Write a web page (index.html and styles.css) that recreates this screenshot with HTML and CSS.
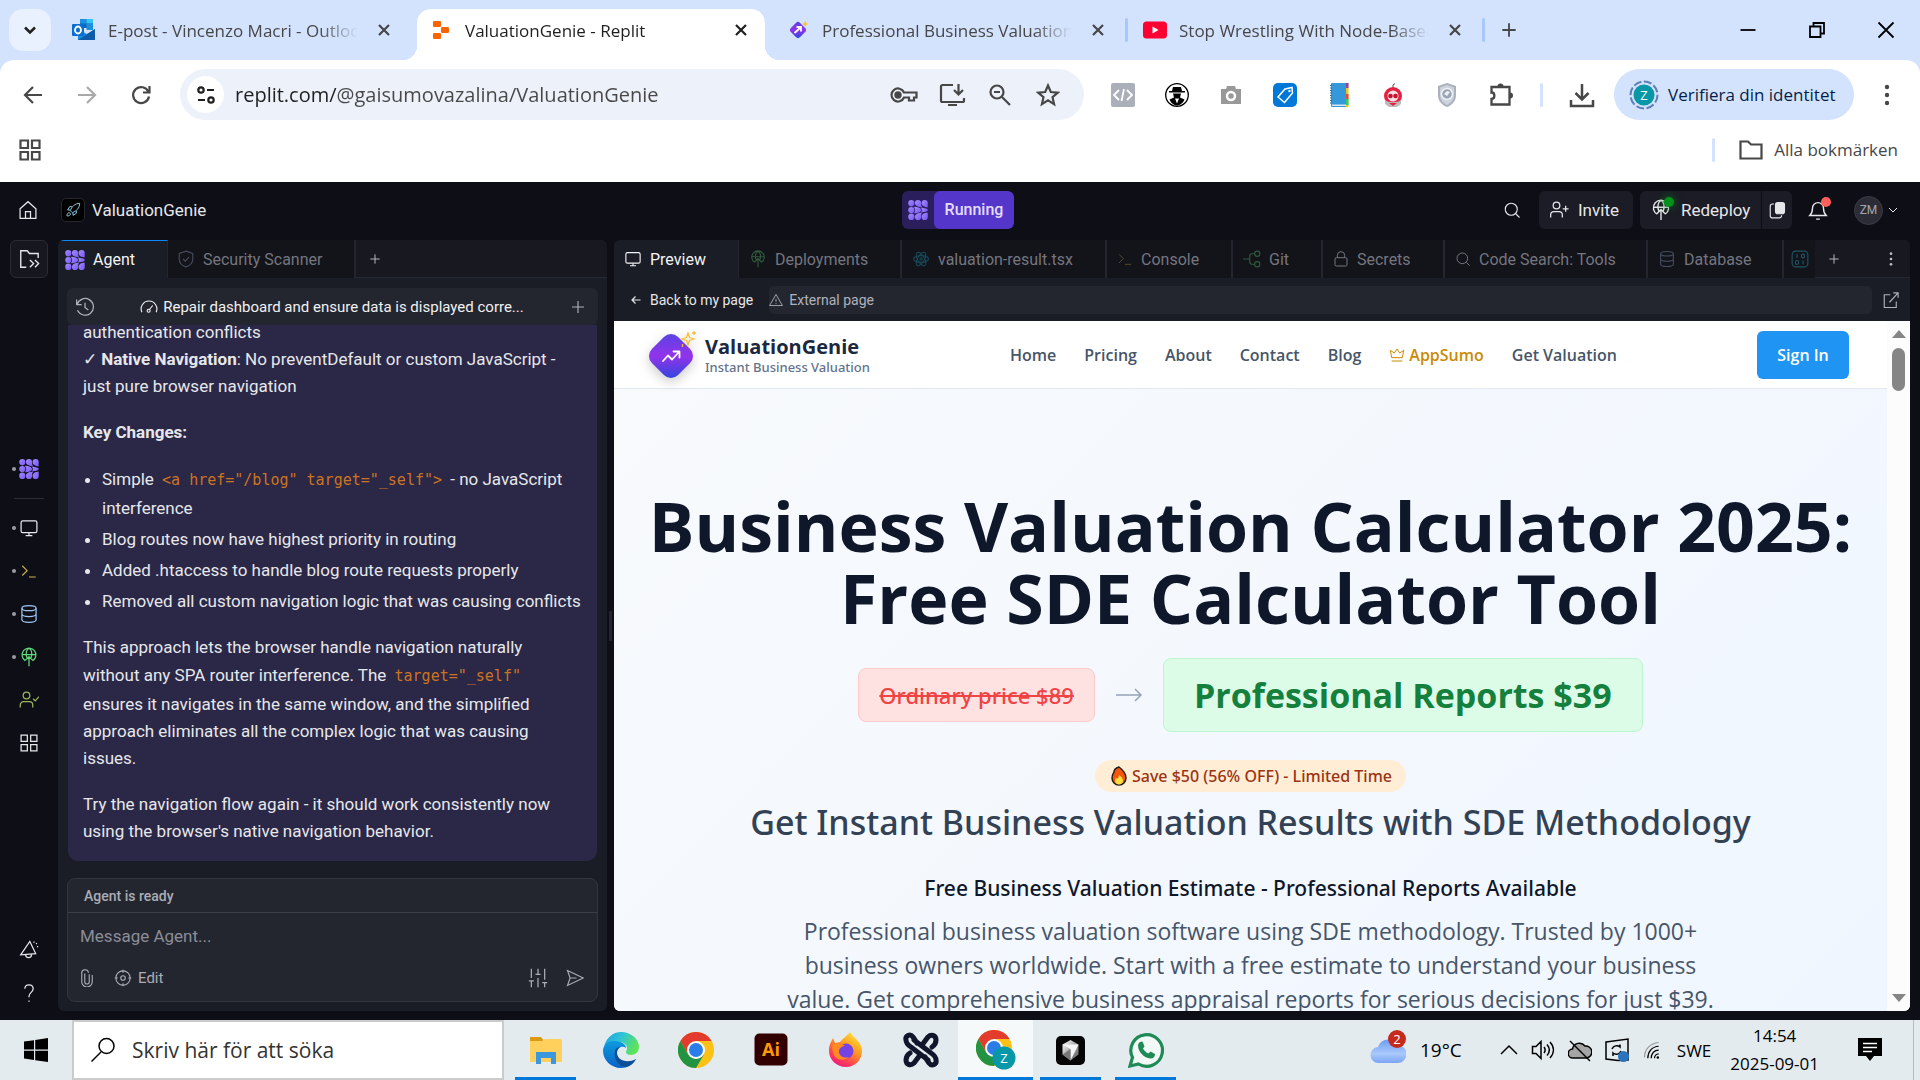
FILE: index.html
```html
<!DOCTYPE html>
<html lang="sv">
<head>
<meta charset="utf-8">
<meta name="viewport" content="width=device-width, initial-scale=1">
<title>ValuationGenie - Replit</title>
<link rel="stylesheet" href="styles.css">
</head>
<body>
<svg class="sprite" aria-hidden="true">
  <defs>
    <linearGradient id="gem" x1="0" y1="0" x2="1" y2="1"><stop offset="0" stop-color="#4f46e5"/><stop offset=".5" stop-color="#9333ea"/><stop offset="1" stop-color="#2149dc"/></linearGradient>
    <linearGradient id="agentfill" x1="0" y1="0" x2="1" y2="1"><stop offset="0" stop-color="#a48bff"/><stop offset="1" stop-color="#7657f5"/></linearGradient>
    <linearGradient id="edgeA" x1="0" y1="0" x2="1" y2=".4"><stop offset="0" stop-color="#1a9fe0"/><stop offset=".5" stop-color="#2fc3d8"/><stop offset="1" stop-color="#5be35a"/></linearGradient>
    <linearGradient id="edgeB" x1="0" y1="0" x2="0" y2="1"><stop offset="0" stop-color="#0c9be0"/><stop offset="1" stop-color="#0b62c4"/></linearGradient>
    <linearGradient id="fox" x1=".8" y1="0" x2=".2" y2="1"><stop offset="0" stop-color="#ffe93b"/><stop offset=".4" stop-color="#ff9a1f"/><stop offset=".75" stop-color="#ff3f55"/><stop offset="1" stop-color="#e31587"/></linearGradient>
    <linearGradient id="cloudfill" x1="0" y1="0" x2="0" y2="1"><stop offset="0" stop-color="#6d9cf2"/><stop offset=".6" stop-color="#a9c9fb"/><stop offset="1" stop-color="#7ba5f4"/></linearGradient>
    <linearGradient id="cube" x1="0" y1="0" x2="1" y2="1"><stop offset="0" stop-color="#fff"/><stop offset="1" stop-color="#555"/></linearGradient>
  </defs>
  <symbol id="i-x" viewBox="0 0 24 24"><path d="M7 7l10 10M17 7L7 17" stroke-width="2.2"/></symbol>
  <symbol id="i-plus" viewBox="0 0 24 24"><path d="M12 4v16M4 12h16"/></symbol>
  <symbol id="i-agent" viewBox="0 0 24 24"><g fill="url(#agentfill)" stroke="none"><path d="M4 0a3.700 3.700 0 0 1 3.700 3.700C7.700 5.500 7 7.700 4 7.700S.3 5.500.3 3.700A3.700 3.700 0 0 1 4 0z"/><path d="M12 0a3.700 3.700 0 0 1 3.700 3.700c0 2-.2 3 1.500 5.300C12 8.500 8.300 7 8.300 3.700A3.700 3.700 0 0 1 12 0z"/><path d="M20 0a3.700 3.700 0 0 1 3.700 3.700c0 2 0 3-.2 5.300-4-.5-7.200-2-7.200-5.300A3.700 3.700 0 0 1 20 0z"/><circle cx="4" cy="12" r="3.700"/><path d="M7 8c5 0 8.700 1.500 8.700 4S12 16 7 16c2.200-2.500 2.200-5.500 0-8z"/><path d="M15.500 9.200c4.500.2 8.200 1 8.200 2.800s-3.700 2.600-8.200 2.800c1.500-2 1.500-3.600 0-5.600z"/><path d="M4 24a3.700 3.700 0 0 0 3.700-3.700c0-1.800-.7-4-3.700-4s-3.700 2.200-3.700 4A3.700 3.700 0 0 0 4 24z"/><path d="M12 24a3.700 3.700 0 0 0 3.700-3.700c0-2-.2-3 1.500-5.300-5.200.5-8.900 2-8.900 5.300A3.700 3.700 0 0 0 12 24z"/><path d="M20 24a3.700 3.700 0 0 0 3.700-3.700c0-2 0-3-.2-5.300-4 .5-7.200 2-7.200 5.300A3.700 3.700 0 0 0 20 24z"/></g></symbol>
  <symbol id="i-monitor" viewBox="0 0 24 24"><rect x="2.500" y="3.500" width="19" height="14" rx="2"/><path d="M12 18v3M8 21h8"/></symbol>
  <symbol id="i-console" viewBox="0 0 24 24"><path d="M3 5l6.500 6.500L3 18M12 20h9"/></symbol>
  <symbol id="i-db" viewBox="0 0 24 24"><ellipse cx="12" cy="5" rx="8.500" ry="3"/><path d="M3.500 5v14c0 1.700 3.800 3 8.500 3s8.500-1.300 8.500-3V5M3.500 12c0 1.700 3.800 3 8.500 3s8.500-1.300 8.500-3"/></symbol>
  <symbol id="i-deploy" viewBox="0 0 24 24"><path d="M7.500 16.500a8.300 8.300 0 1 1 9 0M4 9h16M9.500 13C7.500 8 9 3 12 1.500 15 3 16.500 8 14.500 13M12 23V11M7.500 16L12 11.500 16.500 16"/></symbol>
  <symbol id="i-grid" viewBox="0 0 24 24"><path d="M2.500 2.500h7.500v7.500H2.500zM14 2.500h7.500v7.500H14zM2.500 14h7.500v7.500H2.500zM14 14h7.500v7.500H14z"/></symbol>
  <symbol id="i-search" viewBox="0 0 24 24"><circle cx="11" cy="11" r="8"/><path d="M17 17l5 5"/></symbol>
</svg>

<div class="screen">
<header class="chrome">
  <div class="tabstrip">
    <button class="tabs-menu" aria-label="Sök bland flikar"><svg class="ic s20" viewBox="0 0 24 24"><path d="M6 9l6 6 6-6" stroke-width="3"/></svg></button>
    <div class="btab">
      <svg class="fav" viewBox="0 0 24 24"><path d="M8 1h13v9H8z" fill="#1066b5"/><path d="M8 1h6.500v4.500H8z" fill="#1b8fe0"/><path d="M14.500 1H21v4.500h-6.500z" fill="#35c5f4"/><path d="M14.500 5.500H21V12h-6.500z" fill="#1b8fe0"/><path d="M6 11l9 5 8-5v11H6z" fill="#1490df"/><path d="M6 22l17-11v11z" fill="#0f5ba8"/><rect x="0" y="6" width="12" height="12" rx="1" fill="#0a6ed1"/><ellipse cx="6" cy="12" rx="3" ry="3.500" fill="none" stroke="#fff" stroke-width="1.800"/></svg>
      <span class="btab-title">E-post - Vincenzo Macri - Outlook</span>
      <button class="btab-x" aria-label="Stäng"><svg class="ic s24"><use href="#i-x"/></svg></button>
    </div>
    <div class="btab active">
      <svg class="fav" viewBox="0 0 24 24"><g fill="#f96302"><rect x="4" y="3" width="8" height="6" rx="1.300"/><rect x="12" y="9" width="8" height="6" rx="1.300"/><rect x="4" y="15" width="8" height="6" rx="1.300"/></g></svg>
      <span class="btab-title">ValuationGenie - Replit</span>
      <button class="btab-x" aria-label="Stäng"><svg class="ic s24"><use href="#i-x"/></svg></button>
    </div>
    <div class="btab">
      <svg class="fav" viewBox="0 0 24 24"><rect x="5.500" y="5.500" width="13" height="13" rx="3" transform="rotate(45 12 12)" fill="url(#gem)"/><path d="M8.500 15l6-5.500M10.500 9h4.500v4.500" fill="none" stroke="#fff" stroke-width="1.800"/><path d="M19 3l1 2 2 1-2 1-1 2-1-2-1-1 1-1z" fill="#f7bf3a"/></svg>
      <span class="btab-title">Professional Business Valuation</span>
      <button class="btab-x" aria-label="Stäng"><svg class="ic s24"><use href="#i-x"/></svg></button>
    </div>
    <div class="btab divided">
      <svg class="fav" viewBox="0 0 24 24"><rect x="0" y="3.500" width="24" height="17" rx="3.500" fill="#ff0033"/><path d="M9.500 8.500v7l6-3.500z" fill="#fff"/></svg>
      <span class="btab-title">Stop Wrestling With Node-Based</span>
      <button class="btab-x" aria-label="Stäng"><svg class="ic s24"><use href="#i-x"/></svg></button>
    </div>
    <button class="newtab" aria-label="Ny flik"><svg class="ic s20"><use href="#i-plus"/></svg></button>
    <div class="winbtns">
      <button aria-label="Minimera"><svg class="ic s18" viewBox="0 0 18 18"><path d="M1.500 9h15" stroke-width="1.800"/></svg></button>
      <button aria-label="Återställ"><svg class="ic s18" viewBox="0 0 18 18"><path d="M2 5.500h10.500V16H2zM5.500 5V2H16v10.500h-3" stroke-width="1.800"/></svg></button>
      <button aria-label="Stäng"><svg class="ic s18" viewBox="0 0 18 18"><path d="M1.500 1.500l15 15M16.500 1.500l-15 15" stroke-width="1.800"/></svg></button>
    </div>
  </div>

  <div class="toolbar">
    <button class="slot" aria-label="Bakåt"><svg class="ic s24" viewBox="0 0 24 24"><path d="M21 12H4M12 4l-8 8 8 8" stroke-width="2.200"/></svg></button>
    <button class="slot dim" aria-label="Framåt"><svg class="ic s24" viewBox="0 0 24 24"><path d="M3 12h17M12 4l8 8-8 8" stroke-width="2.200"/></svg></button>
    <button class="slot" aria-label="Läs in igen"><svg class="ic s24" viewBox="0 0 24 24"><path d="M19.500 9A8 8 0 1 0 20 13.500M20.500 3v6.500H14" stroke-width="2.200"/></svg></button>
    <div class="omnibox">
      <button class="siteinfo" aria-label="Webbplatsinformation"><svg class="ic s24" viewBox="0 0 24 24"><circle cx="7" cy="7" r="2.700"/><path d="M13 7h7M4 17h7"/><circle cx="17" cy="17" r="2.700"/></svg></button>
      <input class="url" aria-label="Adress" value="replit.com/@gaisumovazalina/ValuationGenie">
      <button class="slot48" aria-label="Lösenord"><svg class="ic s28" viewBox="0 0 28 28"><path d="M14 11.500A6.500 6.500 0 1 0 14 16.500h5v3h5v-3h2.500v-5z"/><circle cx="8" cy="14" r="2.600" fill="currentColor"/></svg></button>
      <button class="slot48" aria-label="Installera"><svg class="ic s28" viewBox="0 0 28 28"><path d="M15 4H4.500a1.500 1.500 0 0 0-1.500 1.500v14A1.500 1.500 0 0 0 4.500 21h20a1.500 1.500 0 0 0 1.500-1.500V17M20.500 3v10M16 9l4.500 4.500L25 9M10 24h9"/></svg></button>
      <button class="slot48" aria-label="Zooma"><svg class="ic s24" viewBox="0 0 24 24"><circle cx="9" cy="9" r="6.500"/><path d="M14 14l8 8M6 9h6"/></svg></button>
      <button class="slot48" aria-label="Bokmärke"><svg class="ic s24" viewBox="0 0 24 24"><path d="M12 2.500l2.800 6.500 7 .6-5.300 4.600 1.600 6.900L12 17.400l-6.100 3.700 1.600-6.900L2.200 9.600l7-.6z"/></svg></button>
    </div>
    <div class="exts">
      <button class="slot" aria-label="Kod"><svg class="s24" viewBox="0 0 24 24"><rect width="24" height="24" rx="2" fill="#abafb9"/><path d="M8 7l-5 5 5 5M16 7l5 5-5 5M13 6l-2.500 12" fill="none" stroke="#fff" stroke-width="1.800"/></svg></button>
      <button class="slot" aria-label="Detektiv"><svg class="s24" viewBox="0 0 24 24"><circle cx="12" cy="12" r="11.300" fill="#fff" stroke="#000" stroke-width="1.300"/><path d="M8 4h8l1 4h3v1.500H4V8h3zM8 10.500h8l-1 4 4.500 2c-1.500 3.500-4.500 6-7.500 6s-6-2.500-7.500-6l4.500-2z"/><path d="M10 15.500h4l-2 5z" fill="#fff"/></svg></button>
      <button class="slot" aria-label="Kamera"><svg class="s24" viewBox="0 0 24 24"><path d="M2 6h5l1-3h8l1 3h5v15H2z" fill="#999"/><circle cx="12" cy="13" r="4" fill="#999" stroke="#fff" stroke-width="2.500"/></svg></button>
      <button class="slot" aria-label="Etikett"><svg class="s24" viewBox="0 0 24 24"><rect width="24" height="24" rx="5" fill="#0078d7"/><path d="M12 6l7-1.500L19.500 10l-8 9.500L5 14z" fill="none" stroke="#fff" stroke-width="1.500"/><circle cx="16.500" cy="8" r="1.200" fill="#fff"/></svg></button>
      <button class="slot" aria-label="Anteckningar"><svg class="s24" viewBox="0 0 24 24"><path d="M18 0h3.500v24H18z" fill="#eac81a"/><path d="M18 0h3.500v5H18z" fill="#8e44ad"/><path d="M18 11h3.500v5H18z" fill="#e74c3c"/><path d="M18 16h3.500v6H18z" fill="#2ecc71"/><rect x="4" width="15" height="24" rx="1" fill="#3498db"/><path d="M5 21.500h14V23H5z" fill="#d5e6f2"/><path d="M4 2v20" stroke="#2d6e9e" stroke-width="2" stroke-dasharray="1 1.500"/></svg></button>
      <button class="slot" aria-label="Robot"><svg class="s24" viewBox="0 0 24 24"><path d="M12 5V2l2-1.500" stroke="#555" fill="none"/><circle cx="12" cy="13" r="9" fill="#e6213f"/><path d="M4 17c3 3 13 3 16 0v4l-4 3H8l-4-3z" fill="#bbb"/><path d="M8 20l4 3 4-3z" fill="#e6213f"/><circle cx="12" cy="13" r="5.500" fill="#f8dfe3"/><circle cx="9.500" cy="13" r="2.300" fill="#c4112e"/><circle cx="14.500" cy="13" r="2.300" fill="#c4112e"/></svg></button>
      <button class="slot" aria-label="Sköld"><svg class="s24" viewBox="0 0 24 24"><path d="M12 0l9 3v9c0 6-4 10-9 12-5-2-9-6-9-12V3z" fill="#a9b1bd"/><path d="M12 2l7 2.500V12c0 5-3 8-7 10-4-2-7-5-7-10V4.500z" fill="#cdd3dc"/><circle cx="12" cy="11" r="5.500" fill="#9aa6b6" stroke="#eef1f5" stroke-width="1.500"/><path d="M9 11l3-3 3 1-3 4z" fill="#eef1f5"/></svg></button>
      <button class="slot" aria-label="Tillägg"><svg class="ic s26" viewBox="0 0 26 26"><path d="M3.500 5h18v17.500h-18v-5.500c3.800 0 3.800-6.500 0-6.500z" stroke-width="2.300"/><path d="M9.500 4.500a3 3 0 0 1 6 0zM22 10.500a3 3 0 0 1 0 6z" fill="currentColor" stroke="none"/></svg></button>
    </div>
    <span class="vsep"></span>
    <button class="slot" aria-label="Nedladdningar"><svg class="ic s26" viewBox="0 0 26 26"><path d="M13 2v15M6.500 11l6.500 6.500L19.500 11M2 18v6h22v-6" stroke-width="2.500"/></svg></button>
    <button class="profile"><svg class="s30" viewBox="0 0 30 30"><circle cx="15" cy="15" r="13.500" fill="none" stroke="#5c7fb8" stroke-width="2" stroke-dasharray="8 2.500"/><circle cx="15" cy="15" r="10.500" fill="#0897a7"/><text x="15" y="20" text-anchor="middle" font-size="13" fill="#fff">Z</text></svg><span>Verifiera din identitet</span></button>
    <button class="slot" aria-label="Meny"><svg class="s24" viewBox="0 0 24 24"><g fill="#474747"><circle cx="12" cy="4" r="2.200"/><circle cx="12" cy="12" r="2.200"/><circle cx="12" cy="20" r="2.200"/></g></svg></button>
  </div>

  <div class="bookmarks">
    <button class="slot" aria-label="Appar"><svg class="ic s24"><use href="#i-grid"/></svg></button>
    <button class="allmarks"><svg class="ic s26" viewBox="0 0 26 26"><path d="M2.500 4.500h7.500l3 3h10.500v14h-21z"/></svg><span>Alla bokmärken</span></button>
  </div>
</header>

<main class="replit">
  <div class="topbar">
    <div class="tb-left">
      <a class="home" href="#" aria-label="Hem"><svg class="ic s20" viewBox="0 0 24 24"><path d="M2.500 10.500L12 2l9.500 8.500V22h-19zM9 22v-8h6v8"/></svg></a>
      <span class="appicon"><svg class="ic s16" viewBox="0 0 24 24"><path d="M8 13C10 7 15 2 22 2c0 7-5 12-11 14zM8 12H4l3-5h4M12 16v4l5-3v-4M3 21c0-3 1-5 3-5s3 3 1 4-4 1-4 1z"/></svg></span>
      <span class="appname">ValuationGenie</span>
    </div>
    <button class="running"><span class="run-ic"><svg class="s20"><use href="#i-agent"/></svg></span><span class="run-tx">Running</span></button>
    <div class="tb-right">
      <button class="bare" aria-label="Sök"><svg class="ic s18"><use href="#i-search"/></svg></button>
      <button class="dbtn invite"><svg class="ic s20" viewBox="0 0 24 24"><circle cx="9" cy="6.500" r="4"/><path d="M2 21v-3a4 4 0 0 1 4-4h6a4 4 0 0 1 4 4v3M20 7v7M16.500 10.500h7"/></svg>Invite</button>
      <div class="split">
        <button class="dbtn redeploy"><span class="dotwrap"><svg class="ic s22"><use href="#i-deploy"/></svg><i class="dot green"></i></span>Redeploy</button>
        <button class="dbtn pages" aria-label="Sidor"><svg class="ic s18" viewBox="0 0 24 24"><path d="M18 19v0a3 3 0 0 1-3 3.500H6a3 3 0 0 1-3-3V7a3 3 0 0 1 3-3h2"/><rect x="10" y="2" width="12" height="15" rx="3" fill="currentColor"/></svg></button>
      </div>
      <button class="bare bell" aria-label="Aviseringar"><span class="dotwrap"><svg class="ic s22" viewBox="0 0 24 24"><path d="M3 18h18c-2-2-3-4-3-8a6 6 0 0 0-12 0c0 4-1 6-3 8zM10 22h4"/></svg><i class="dot red"></i></span></button>
      <button class="bare me"><span class="zm">ZM</span><svg class="ic s10" viewBox="0 0 10 10"><path d="M1 3l4 4 4-4" stroke-width="1"/></svg></button>
    </div>
  </div>

  <div class="work">
    <nav class="rail">
      <button class="railbtn" aria-label="Filer"><svg class="ic s22" viewBox="0 0 24 24"><path d="M9 21H3V3h7l2.500 3H22v5M13 13l4 4-4 4M18.500 13l4 4-4 4"/></svg></button>
      <div class="railicons">
        <button class="on" aria-label="Agent"><svg class="s20"><use href="#i-agent"/></svg></button>
        <hr>
        <button class="on" aria-label="Preview"><svg class="ic s20"><use href="#i-monitor"/></svg></button>
        <button class="on c-yellow" aria-label="Console"><svg class="ic s18"><use href="#i-console"/></svg></button>
        <button class="on c-blue" aria-label="Database"><svg class="ic s20"><use href="#i-db"/></svg></button>
        <button class="on c-green" aria-label="Deployments"><svg class="ic s20"><use href="#i-deploy"/></svg></button>
        <button class="c-lime" aria-label="Auth"><svg class="ic s20" viewBox="0 0 24 24"><circle cx="9" cy="6.500" r="4"/><path d="M1.500 21v-3a4 4 0 0 1 4-4h7a4 4 0 0 1 4 4v3M17 10.500l2.500 2.500L24 8"/></svg></button>
        <button aria-label="Alla verktyg"><svg class="ic s20"><use href="#i-grid"/></svg></button>
      </div>
      <div class="railfoot">
        <button aria-label="Nyheter"><svg class="ic s20" viewBox="0 0 24 24"><path d="M2 19L13 3l7 14.500zM8 18.500c0 5 7 5 7 0M18 3v1.500M21.500 5L20.500 6M23 9h-1.500"/></svg></button>
        <button aria-label="Hjälp"><svg class="ic s20" viewBox="0 0 24 24"><path d="M7 7c0-6.500 10-6.500 10 0 0 4-5 4.500-5 9v1M12 21v1.500"/></svg></button>
      </div>
    </nav>

    <section class="panel agent">
      <div class="ptabs">
        <button class="ptab sel blue"><svg class="s20"><use href="#i-agent"/></svg>Agent</button>
        <button class="ptab sec"><svg class="ic s18 c-slate" viewBox="0 0 24 24"><path d="M12 1.500l9 3V12c0 5-4 9-9 10.500C7 21 3 17 3 12V4.500zM8 12l3 3 5-5.500"/></svg>Security Scanner</button>
        <button class="padd" aria-label="Ny flik"><svg class="ic s14"><use href="#i-plus"/></svg></button>
      </div>
      <div class="agentbody">
        <div class="chathead">
          <svg class="ic s20" viewBox="0 0 24 24"><path d="M2 3v6h6M2.500 9A10 10 0 1 1 3 16M12 7v5.500l4 3"/></svg>
          <span class="chattitle"><svg class="ic s18" viewBox="0 0 24 24"><path d="M2.500 19a10.500 10.500 0 1 1 19 0M12 16l5-6"/><circle cx="11.500" cy="17" r="2"/></svg><span>Repair dashboard and ensure data is displayed corre...</span></span>
          <button class="bare" aria-label="Ny chatt"><svg class="ic s18"><use href="#i-plus"/></svg></button>
        </div>
        <div class="message">
          <p>authentication conflicts<br>✓ <b>Native Navigation</b>: No preventDefault or custom JavaScript -<br>just pure browser navigation</p>
          <p><b>Key Changes:</b></p>
          <ul>
            <li>Simple <code>&lt;a href="/blog" target="_self"&gt;</code> - no JavaScript<br>interference</li>
            <li>Blog routes now have highest priority in routing</li>
            <li>Added .htaccess to handle blog route requests properly</li>
            <li>Removed all custom navigation logic that was causing conflicts</li>
          </ul>
          <p>This approach lets the browser handle navigation naturally<br>without any SPA router interference. The <code>target="_self"</code><br>ensures it navigates in the same window, and the simplified<br>approach eliminates all the complex logic that was causing<br>issues.</p>
          <p>Try the navigation flow again - it should work consistently now<br>using the browser's native navigation behavior.</p>
        </div>
        <form class="composer">
          <div class="status">Agent is ready</div>
          <textarea aria-label="Message Agent" placeholder="Message Agent..." rows="1"></textarea>
          <div class="tools">
            <button type="button" class="bare" aria-label="Bifoga"><svg class="ic s18" viewBox="0 0 24 24"><path d="M15 7v10a3 3 0 0 1-6 0V6M19 8v9a7 7 0 0 1-14 0V6a4.500 4.500 0 0 1 9-1"/></svg></button>
            <button type="button" class="bare edit"><svg class="ic s18" viewBox="0 0 24 24"><circle cx="12" cy="12" r="9.500"/><circle cx="12" cy="12" r="3"/><path d="M12 1v4M12 19v4M1 12h4M19 12h4"/></svg>Edit</button>
            <button type="button" class="bare tune" aria-label="Inställningar"><svg class="ic s20" viewBox="0 0 24 24"><path d="M4 1v11M4 16v7M1 15.500h6M12 1v6M12 12v11M9 7.500h6M20 1v13M20 18v5M17 17.500h6"/></svg></button>
            <button class="bare" aria-label="Skicka"><svg class="ic s18" viewBox="0 0 24 24"><path d="M2 2l21 10L2 22l3.500-10zM5.500 12H14"/></svg></button>
          </div>
        </form>
      </div>
    </section>

    <div class="gutter"><i></i></div>

    <section class="panel preview">
      <div class="ptabs">
        <button class="ptab sel t-preview"><svg class="ic s18"><use href="#i-monitor"/></svg>Preview</button>
        <button class="ptab t-deploy"><svg class="ic s18 c-dgreen"><use href="#i-deploy"/></svg>Deployments</button>
        <button class="ptab t-tsx"><svg class="ic s18 c-teal" viewBox="0 0 24 24"><ellipse cx="12" cy="12" rx="10" ry="4.500"/><ellipse cx="12" cy="12" rx="10" ry="4.500" transform="rotate(60 12 12)"/><ellipse cx="12" cy="12" rx="10" ry="4.500" transform="rotate(120 12 12)"/><circle cx="12" cy="12" r="1.500"/></svg>valuation-result.tsx</button>
        <button class="ptab t-console"><svg class="ic s16 c-olive"><use href="#i-console"/></svg>Console</button>
        <button class="ptab t-git"><svg class="ic s18 c-dgreen" viewBox="0 0 24 24"><circle cx="19" cy="5" r="3.500"/><circle cx="19" cy="19" r="3.500"/><path d="M0 12h9M15.500 5H12a3 3 0 0 0-3 3v8a3 3 0 0 0 3 3h3.500"/></svg>Git</button>
        <button class="ptab t-secrets"><svg class="ic s16" viewBox="0 0 24 24"><rect x="3" y="10" width="18" height="12.500" rx="2"/><path d="M6.500 10V6.500a5.500 5.500 0 0 1 11 0V10"/></svg>Secrets</button>
        <button class="ptab t-search"><svg class="ic s16"><use href="#i-search"/></svg>Code Search: Tools</button>
        <button class="ptab t-db"><svg class="ic s18 c-slate"><use href="#i-db"/></svg>Database</button>
        <button class="ptab t-bin" aria-label="Shell"><svg class="ic s18 c-cyan" viewBox="0 0 24 24"><rect x="1.500" y="1.500" width="21" height="21" rx="5"/><path d="M8 5.500v5M16 14v5"/><rect x="14" y="5.500" width="4" height="5" rx="1.500"/><rect x="6" y="14" width="4" height="5" rx="1.500"/></svg></button>
        <button class="padd" aria-label="Ny flik"><svg class="ic s14"><use href="#i-plus"/></svg></button>
        <button class="pmore" aria-label="Mer"><svg class="s16" viewBox="0 0 24 24"><g fill="#b9bcc4"><circle cx="12" cy="4" r="2"/><circle cx="12" cy="12" r="2"/><circle cx="12" cy="20" r="2"/></g></svg></button>
      </div>
      <div class="addr">
        <a class="back" href="#"><svg class="ic s10" viewBox="0 0 10 10"><path d="M9.500 5H1M4.500 1.500L1 5l3.500 3.500" stroke-width="1.200"/></svg>Back to my page</a>
        <div class="ext"><svg class="ic s14" viewBox="0 0 24 24"><path d="M12 2.500L23 21.500H1zM12 10v5M12 17.500V19"/></svg>External page</div>
        <button class="bare" aria-label="Öppna i ny flik"><svg class="ic s18" viewBox="0 0 24 24"><path d="M11 5H3v17h16v-8M10 15L21.500 2.500M15 2.500h6.500V9"/></svg></button>
      </div>
      <div class="frame">
        <div class="site">
          <header class="sitehead">
            <a class="brand" href="#">
              <svg class="gem" viewBox="0 0 52 52"><rect x="7.500" y="8.500" width="37" height="37" rx="10" transform="rotate(45 26 27)" fill="url(#gem)"/><path d="M18 32l5-5.500 4 4 7-7.500M28.500 22.500h6v6" fill="none" stroke="#fff" stroke-width="1.800" stroke-linecap="round" stroke-linejoin="round"/><path d="M43 4l1.500 4.500L49 10l-4.500 1.500L43 16l-1.500-4.500L37 10l4.500-1.500zM49 2v4M47 4h4M37.500 15v3" fill="none" stroke="#f7bf3a" stroke-width="1.300"/></svg>
              <span class="brandtx"><b>ValuationGenie</b><small>Instant Business Valuation</small></span>
            </a>
            <nav class="sitenav">
              <a href="#">Home</a><a href="#">Pricing</a><a href="#">About</a><a href="#">Contact</a><a href="#">Blog</a>
              <a href="#" class="gold"><svg class="ic s16" viewBox="0 0 24 24"><path d="M4 16L2 5l6 4 4-6 4 6 6-4-2 11zM4 21h16"/></svg>AppSumo</a>
              <a href="#">Get Valuation</a>
            </nav>
            <button class="signin">Sign In</button>
          </header>
          <div class="hero">
            <h1>Business Valuation Calculator 2025:<br>Free SDE Calculator Tool</h1>
            <div class="prices">
              <s>Ordinary price $89</s>
              <svg class="ic arrow" viewBox="0 0 28 16"><path d="M1 8h25M20 2l6 6-6 6"/></svg>
              <strong>Professional Reports $39</strong>
            </div>
            <div class="save"><svg class="s20" viewBox="0 0 20 20"><path d="M10 1c4 3 7 7 7 11 0 4-3 7-7 7s-7-3-7-7c0-3 1-4 2-6 0-3 2-4 5-5z" fill="#f2570c" stroke="#1c1c1c" stroke-width="1.400"/><path d="M10 9c3 2 4 4 4 6s-2 3.500-4 3.500S6 17 6 15c0-1 0-2 1-3l1 1c1-1 2-2 2-4z" fill="#ffdd3c"/></svg>Save $50 (56% OFF) - Limited Time</div>
            <h2>Get Instant Business Valuation Results with SDE Methodology</h2>
            <h3>Free Business Valuation Estimate - Professional Reports Available</h3>
            <p>Professional business valuation software using SDE methodology. Trusted by 1000+<br>business owners worldwide. Start with a free estimate to understand your business<br>value. Get comprehensive business appraisal reports for serious decisions for just $39.</p>
          </div>
        </div>
        <div class="sbar"><svg viewBox="0 0 14 10"><path d="M7 1l7 8H0z" fill="#858585"/></svg><i></i><svg viewBox="0 0 14 10"><path d="M7 9L0 1h14z" fill="#858585"/></svg></div>
      </div>
    </section>
  </div>
</main>

<footer class="taskbar">
  <button class="start" aria-label="Start"><svg class="s24" viewBox="0 0 24 24"><path d="M0 3.500l10-1.300v9.300H0zM11.200 2L24 0v11.500H11.200zM0 12.700h10V22L0 20.600zM11.200 12.700H24V24l-12.800-1.800z"/></svg></button>
  <label class="wsearch"><svg class="ic s26" viewBox="0 0 26 26"><circle cx="16.500" cy="9" r="7.500"/><path d="M11 15L1.500 24.500"/></svg><input placeholder="Skriv här för att söka" aria-label="Sök"></label>
  <div class="apps">
    <button class="open" aria-label="Utforskaren"><svg class="s36" viewBox="0 0 36 36"><path d="M2 5h11l3 4H2z" fill="#dc9a12"/><path d="M2 9h12l3-2h15a2 2 0 0 1 2 2v21H2z" fill="#ffd05c"/><path d="M8 20h20v12h-5v-6H13v6H8z" fill="#3c98de"/></svg></button>
    <button aria-label="Edge"><svg class="s36" viewBox="0 0 36 36"><path d="M1 15C3 6 10 0 18 0c10 0 18 7 18 15 0 5-4 8-8 8-3 0-5-1-5-3 0-1 1-2 1-4 0-3-3-6-8-6-7 0-12 2-15 5z" fill="url(#edgeA)"/><path d="M0 19c0-6 5-10 11-10 7 0 12 3 12 7-4-3-9 0-9 5 0 6 6 10 12 9 2 0 5-1 7-3-3 6-9 9-15 9C8 36 0 28 0 19z" fill="url(#edgeB)"/><path d="M12 18c-2 9 3 16 11 17 4-1 8-4 10-8-9 5-20 1-19-7 0-2 1-3 3-5-2 0-4 1-5 3z" fill="#0d4f97"/></svg></button>
    <button aria-label="Chrome"><svg class="s36" viewBox="0 0 36 36"><circle cx="18" cy="18" r="18" fill="#fbc116"/><path d="M18 9h15.600A18 18 0 0 0 2.400 9L10 22z" fill="#e33b2e"/><path d="M2.400 9A18 18 0 0 0 18 36l8-13.500-8 3-7.800-3z" fill="#229342"/><circle cx="18" cy="18" r="9" fill="#fff"/><circle cx="18" cy="18" r="7" fill="#2b7de9"/></svg></button>
    <button aria-label="Illustrator"><svg class="s36" viewBox="0 0 36 36"><rect x="1.500" y="1.500" width="33" height="32" rx="5" fill="#330000"/><text x="18" y="24" text-anchor="middle" font-size="18" font-weight="700" fill="#ff9a00">Ai</text></svg></button>
    <button aria-label="Firefox"><svg class="s36" viewBox="0 0 36 36"><path d="M22 0c2 5 12 9 12 19 0 9-7 16-16 16S1 28 1 19C1 13 3 10 5 6l2 5 5-1c3-4 6-5 10-10z" fill="url(#fox)"/><circle cx="18" cy="19" r="7.500" fill="#7542e5"/><path d="M5 12c4-2 9-1 12 2-3 0-5 2-6 4-1 6 5 9 10 7-5 5-15 3-16-5-1-3-1-5 0-8z" fill="#ff8a1f"/></svg></button>
    <button aria-label="Kedja"><svg class="s36" viewBox="0 0 36 36"><g fill="none" stroke="#10162b" stroke-width="5" stroke-linecap="round"><path d="M14 11L10 5C7 1 2 4 3 8c0 3 2 5 5 7l17 13M22 25l4 6c3 4 8 1 7-3 0-3-2-5-5-7L11 8"/><path d="M7 21c-3 2-4 5-4 7 0 5 5 6 8 3l6-8M29 15c3-2 4-5 4-7 0-5-5-6-8-3l-6 8"/></g></svg></button>
    <button class="open cur" aria-label="Chrome Z"><svg class="s40" viewBox="0 0 40 40"><circle cx="18" cy="18" r="18" fill="#fbc116"/><path d="M18 9h15.600A18 18 0 0 0 2.400 9L10 22z" fill="#e33b2e"/><path d="M2.400 9A18 18 0 0 0 18 36l8-13.500-8 3-7.800-3z" fill="#229342"/><circle cx="18" cy="18" r="9" fill="#fff"/><circle cx="18" cy="18" r="7" fill="#2b7de9"/><circle cx="28" cy="28" r="11.500" fill="#0897a7"/><text x="28" y="33" text-anchor="middle" font-size="13" fill="#fff">Z</text></svg></button>
    <button class="open" aria-label="Cursor"><svg class="s36" viewBox="0 0 36 36"><rect x="3" y="4" width="29" height="29" rx="5" fill="#050505"/><path d="M17.500 8l8 4.500v10l-8 6-8-6v-10z" fill="url(#cube)"/><path d="M9.500 12.500h16l-8 16V17z" fill="#f5f5f5"/><path d="M9.500 22.500l8-5.500v11.500z" fill="#777"/></svg></button>
    <button class="open" aria-label="WhatsApp"><svg class="s36" viewBox="0 0 36 36"><path d="M2 34l2.500-8.500A15.800 15.800 0 1 1 10.500 32z" fill="#f2f8f5" stroke="#1e8a56" stroke-width="3.200"/><path d="M12 10l2.500-.5 2 5-1.500 2c1.500 2.500 3 4 5.500 5l2-2 4.500 2.500c0 3-2 4.500-4.500 4.500C16 26 10.500 20 10 14c0-2 1-3.500 2-4z" fill="#1e8a56"/></svg></button>
  </div>
  <div class="tray">
    <button class="weather"><span class="wx"><svg viewBox="0 0 36 26"><path d="M9 26a8 8 0 0 1-1-16A11 11 0 0 1 28 8a9 9 0 0 1-1 18z" fill="url(#cloudfill)"/></svg><em>2</em></span>19°C</button>
    <div class="sys">
    <svg class="ic s18" viewBox="0 0 18 18"><path d="M1 13l8-8 8 8"/></svg>
    <svg class="ic s24" viewBox="0 0 24 24"><path d="M1.500 8.500h3.500L10 3.500v17l-5-5H1.500zM13 9c1.500 2 1.500 4 0 6M16 6.500c3 3.500 3 7.500 0 11M19 4c4.500 5 4.500 11 0 16"/></svg>
    <svg class="ic s24" viewBox="0 0 24 24"><path d="M5 20a4.500 4.500 0 0 1-.5-9A7 7 0 0 1 17 8a6 6 0 0 1 1.500 12z" fill="#a5a5a5"/><path d="M2 3l20 20"/></svg>
    <svg class="ic s24" viewBox="0 0 24 24"><path d="M1 4l22-3v21l-10 .5L1 21zM7 11a5 5 0 0 1 8-2V6.500M16 13a5 5 0 0 1-8 2v3"/><circle cx="18.500" cy="18.500" r="5.500" fill="#2b73bd" stroke="none"/></svg>
    <svg class="ic s20" viewBox="0 0 24 24"><path d="M3 21C3 11 10 4 20 3" stroke="#999"/><path d="M7 22C7 14 12 8 20 7.500M11 22c0-6 4-10 9-10M15 22c0-3 2-5.500 5-5.500"/><circle cx="19" cy="21" r="1.500" fill="#000" stroke="none"/></svg>
    </div>
    <span class="lang">SWE</span>
    <time class="clock">14:54<br>2025-09-01</time>
    <button class="notif" aria-label="Meddelanden"><svg class="s26" viewBox="0 0 26 26"><path d="M1 1h24v18h-8l-4 5-4-5H1z"/><path d="M6 6.500h14M6 10.500h14M6 14.500h9" stroke="#fff" stroke-width="1.300"/></svg></button>
    <span class="peek"></span>
  </div>
</footer>
</div>
</body>
</html>
```
FILE: styles.css
```css
* { box-sizing: border-box; }
body { margin: 0; font-family: "Open Sans", "Noto Sans", sans-serif; font-size: 16px; }
button, input, textarea { font: inherit; color: inherit; border: 0; background: none; padding: 0; margin: 0; outline: 0; }
a { color: inherit; text-decoration: none; }
.sprite { position: absolute; width: 0; height: 0; }
svg { display: block; flex: none; }
.ic { fill: none; stroke: currentColor; stroke-width: 1.5; }
.s10 { width: 10px; height: 10px; }
.s14 { width: 14px; height: 14px; }
.s16 { width: 16px; height: 16px; }
.s18 { width: 18px; height: 18px; }
.s20 { width: 20px; height: 20px; }
.s22 { width: 22px; height: 22px; }
.s24 { width: 24px; height: 24px; }
.s26 { width: 26px; height: 26px; }
.s28 { width: 28px; height: 28px; }
.s30 { width: 30px; height: 30px; }
.s36 { width: 36px; height: 36px; }
.s40 { width: 40px; height: 40px; }

.screen { display: flex; flex-direction: column; height: 100vh; overflow: hidden; }

/* Browser window */
.chrome { flex: none; background: #d3e2fd; color: #474747; }
.chrome .ic { stroke-width: 2.2; }
.tabstrip { display: flex; height: 60px; padding: 9px 0 0 9px; gap: 9px; }
.tabs-menu { width: 42px; height: 42px; border-radius: 14px; background: #e9f0fe; display: grid; place-items: center; color: #1f1f1f; }
.btab { position: relative; flex: 0 1 348px; min-width: 0; display: flex; align-items: center; gap: 12px; padding: 0 12px 9px; font-size: 17px; color: #474747; border-radius: 14px 14px 0 0; }
.btab.active { background: #fff; color: #1f1f1f; }
.btab.active::before, .btab.active::after { content: ""; position: absolute; bottom: 0; width: 14px; height: 14px; }
.btab.active::before { left: -14px; background: radial-gradient(circle at 0 0, transparent 14px, #fff 14px); }
.btab.active::after { right: -14px; background: radial-gradient(circle at 100% 0, transparent 14px, #fff 14px); }
.btab.divided::before, .btab.divided::after { content: ""; position: absolute; top: 9px; width: 3px; height: 24px; background: #a8c7fa; border-radius: 2px; }
.btab.divided::before { left: -6px; }
.btab.divided::after { right: -6px; }
.fav { width: 24px; height: 24px; }
.btab-title { flex: 1; overflow: hidden; white-space: nowrap; mask-image: linear-gradient(to right, #000 84%, transparent 99%); }
.btab-x { width: 24px; height: 24px; }
.newtab { width: 42px; height: 42px; display: grid; place-items: center; }
.winbtns { margin-left: auto; display: flex; height: 42px; color: #000; }
.winbtns button { width: 69px; display: grid; place-items: center; }
.toolbar { display: flex; align-items: center; height: 69px; padding: 0 6px; background: #fff; border-radius: 14px 14px 0 0; }
.slot { width: 54px; height: 51px; display: grid; place-items: center; flex: none; }
.slot.dim { color: #a9a9a9; }
.omnibox { flex: 1; min-width: 0; height: 51px; margin: 0 12px; padding: 0 12px 0 7px; border-radius: 26px; background: #ecf1fa; display: flex; align-items: center; }
.siteinfo { width: 37px; height: 37px; border-radius: 50%; background: #fff; display: grid; place-items: center; flex: none; margin-right: 11px; color: #1f1f1f; }
.url { flex: 1; min-width: 0; font-size: 20px; color: transparent; background: linear-gradient(to right, #1f1f1f 101px, #474747 101px); -webkit-background-clip: text; background-clip: text; }
.slot48 { width: 48px; height: 48px; display: grid; place-items: center; flex: none; }
.exts { display: flex; }
.vsep { width: 3px; height: 24px; margin: 0 12px; background: #d3e2fd; border-radius: 2px; }
.profile { display: flex; align-items: center; gap: 9px; height: 51px; width: 240px; margin: 0 6px 0 5px; padding-left: 15px; border-radius: 26px; background: #d3e2fd; color: #041e49; font-size: 17px; white-space: nowrap; }
.bookmarks { display: flex; align-items: center; justify-content: space-between; height: 53px; padding: 0 22px 12px 3px; background: #fff; }
.allmarks { display: flex; align-items: center; gap: 10px; padding-left: 26px; position: relative; font-size: 17px; }
.allmarks::before { content: ""; position: absolute; left: 0; width: 3px; height: 24px; background: #d3e2fd; border-radius: 2px; }

/* Replit workspace */
.replit { flex: 1; min-height: 0; display: flex; flex-direction: column; background: #0e0e16; color: #e6e7ea; font-family: Roboto, "Liberation Sans", sans-serif; font-size: 16px; }
.topbar { flex: none; height: 58px; display: grid; grid-template-columns: 1fr auto 1fr; align-items: center; padding: 0 22px 2px 18px; }
.tb-left, .tb-right { display: flex; align-items: center; }
.appicon { width: 24px; height: 24px; margin: 0 7px 0 23px; display: grid; place-items: center; background: #000; border: 1px solid #26262c; border-radius: 5px; color: #8ec6dc; }
.appname { font-size: 17px; }
.running { display: flex; height: 38px; width: 112px; border-radius: 6px; background: #2a1e5c; overflow: hidden; color: #e4dcff; font-weight: 500; }
.run-ic { width: 32px; display: grid; place-items: center; height: 38px; }
.run-tx { flex: 1; line-height: 38px; background: #5437ca; border-radius: 6px; }
.tb-right { justify-content: flex-end; }
.bare { display: flex; align-items: center; }
.dbtn { height: 38px; background: #1b1c25; display: flex; align-items: center; gap: 9px; padding: 0 10px; font-size: 17px; }
.invite { width: 94px; margin: 0 7px 0 18px; border-radius: 6px; }
.split { display: flex; gap: 1px; border-radius: 6px; overflow: hidden; }
.redeploy { width: 121px; }
.pages { padding: 0 6px; }
.dotwrap { position: relative; }
.dot { position: absolute; border-radius: 50%; width: 10px; height: 10px; right: -2px; top: -2px; }
.green { background: #009118; box-shadow: 0 0 8px #0a7a1c; }
.red { background: #ff5f5c; }
.bell { margin: 0 25px 0 15px; }
.me { gap: 5px; }
.zm { width: 29px; height: 29px; border-radius: 50%; background: #2b2c36; border: 1px solid #3a3b45; color: #a3a5ad; font-size: 12px; line-height: 27px; }

.work { flex: 1; min-height: 0; display: flex; padding: 0 10px 9px 0; }
.rail { flex: 0 0 58px; display: flex; flex-direction: column; align-items: center; }
.railbtn { width: 38px; height: 38px; border: 1px solid #2a2b35; border-radius: 6px; background: #17171f; display: grid; place-items: center; }
.railicons { flex: 1; display: flex; flex-direction: column; justify-content: center; gap: 15px; padding-bottom: 2px; }
.rail button:not(.railbtn) { position: relative; width: 58px; height: 28px; display: grid; place-items: center; }
.rail .on::before { content: ""; position: absolute; left: 12px; top: 12px; width: 4px; height: 4px; border-radius: 50%; background: #9a9ca5; }
.rail hr { width: 30px; height: 1px; border: 0; margin: 0 14px; background: #2c2d37; }
.railfoot { display: flex; flex-direction: column; gap: 16px; padding-bottom: 4px; }
.c-yellow { color: #cbb34b; }
.c-blue { color: #9cc3f2; }
.c-green { color: #62d67c; }
.c-lime { color: #9ab55c; }
.c-slate { color: #434d5d; }
.c-dgreen { color: #2f5a3c; }
.c-teal { color: #174858; }
.c-olive { color: #534a2a; }
.c-cyan { color: #1f5666; }

.panel { min-width: 0; display: flex; flex-direction: column; background: #1b1d26; border-radius: 6px; overflow: hidden; }
.agent { flex: 549 1 0; }
.preview { flex: 1296 1 0; }
.gutter { flex: 0 0 7px; display: flex; align-items: center; }
.gutter i { width: 3px; height: 30px; margin-left: 2px; background: #24252f; }
.ptabs { flex: none; display: flex; height: 38px; background: #181820; box-shadow: inset 0 -1px #262731; }
.ptab { display: flex; align-items: center; gap: 8px; padding: 0 10px; white-space: nowrap; color: #74767f; background: #13131a; border-right: 2px solid #24252e; }
.ptab.sel { background: #1b1d26; color: #f2f3f5; border-right-width: 1px; }
.blue { width: 110px; padding-left: 7px; border-top: 1px solid #0f87ff; }
.sec { width: 188px; padding-left: 9px; }
.t-preview { width: 125px; }
.t-deploy { width: 163px; }
.t-tsx { width: 205px; }
.t-console { width: 126px; }
.t-git { width: 90px; }
.t-secrets { width: 122px; }
.t-search { width: 203px; }
.t-db { width: 136px; }
.t-bin { width: 31px; padding: 0 7px; border: 0; }
.padd { width: 38px; display: grid; place-items: center; color: #c9cbd1; }
.pmore { margin-left: auto; width: 38px; display: grid; place-items: center; }
.agentbody { flex: 1; min-height: 0; display: flex; flex-direction: column; padding: 10px 9px 9px; }
.chathead { flex: none; height: 37px; display: flex; align-items: center; justify-content: space-between; padding: 0 11px 0 8px; background: #24262f; border-radius: 6px; color: #b0b2ba; }
.chattitle { display: flex; align-items: center; gap: 5px; font-size: 15px; color: #f0f1f3; }
.message { flex: 1; min-height: 0; display: flex; flex-direction: column; justify-content: flex-end; overflow: hidden; margin: 0 1px 17px; padding: 0 15px 16px; background: #2b2747; border-radius: 0 0 10px 10px; font-size: 17px; line-height: 27px; white-space: nowrap; }
.message p { margin: 0 0 19px; }
.message p:last-child { margin: 0; }
.message ul { margin: 0 0 19px; padding-left: 19px; display: flex; flex-direction: column; gap: 4px; }
.message b { font-weight: 700; }
.message code { display: inline-block; padding: 0 4px; line-height: 30px; font-family: "DejaVu Sans Mono", monospace; font-size: 15px; color: #cb7420; }
.composer { flex: none; display: flex; flex-direction: column; border: 1px solid #34363f; border-radius: 8px; background: #24262f; color: #abadb6; }
.status { height: 34px; padding-left: 16px; line-height: 34px; border-bottom: 1px solid #3b3d47; font-size: 14px; font-weight: 500; }
.composer textarea { height: 42px; padding: 12px 12px 0; line-height: 22px; resize: none; font-size: 17px; }
.composer textarea::placeholder { color: #8b8d97; opacity: 1; }
.tools { display: flex; align-items: center; gap: 18px; height: 46px; padding: 0 13px 0 10px; }
.tools .edit { gap: 6px; font-size: 15px; }
.tune { margin-left: auto; }

.addr { flex: none; display: flex; align-items: center; gap: 10px; height: 43px; padding: 0 10px 0 17px; font-size: 14px; }
.back { display: flex; align-items: center; gap: 9px; margin-right: 6px; }
.ext { flex: 1; height: 28px; display: flex; align-items: center; gap: 6px; background: #24262f; border-radius: 5px; color: #b0b2ba; }
.addr .bare { color: #b0b2ba; }
.frame { flex: 1; min-height: 0; display: flex; font-family: "Open Sans", "Noto Sans", sans-serif; background: #fff; color: #334155; }
.site { flex: 1; min-width: 0; display: flex; flex-direction: column; overflow: hidden; background: linear-gradient(135deg, #f8fafc, #eff6ff); }
.sitehead { flex: none; display: flex; align-items: center; justify-content: space-between; height: 68px; padding: 0 38px 0 31px; background: #fff; border-bottom: 1px solid #e2e8f0; }
.brand { display: flex; align-items: center; gap: 8px; }
.gem { width: 52px; height: 52px; filter: drop-shadow(0 4px 6px #0003); }
.brandtx { display: flex; flex-direction: column; }
.brandtx b { font-size: 20px; line-height: 24px; color: #1c2740; }
.brandtx small { font-family: "Noto Sans", sans-serif; font-size: 13px; line-height: 16px; font-weight: 500; color: #64748b; }
.sitenav { display: flex; gap: 28px; font-size: 16px; font-weight: 600; color: #475569; }
.sitenav .gold { display: flex; align-items: center; gap: 4px; color: #ca8a04; }
.signin { width: 92px; height: 48px; border-radius: 6px; background: #2094f3; color: #fff; font-weight: 600; }
.hero { display: flex; flex-direction: column; align-items: center; padding-top: 101px; text-align: center; white-space: nowrap; }
.hero h1 { margin: 0 0 24px; font-size: 68px; line-height: 72px; font-weight: 700; color: #0f172a; }
.prices { display: flex; align-items: center; gap: 20px; margin-bottom: 28px; }
.prices s { padding: 0 20px; border: 1px solid #fecaca; border-radius: 8px; background: #fee2e2; color: #ef4444; font-family: "Noto Sans", sans-serif; font-size: 22px; font-weight: 500; line-height: 52px; }
.arrow { width: 28px; height: 16px; color: #94a3b8; }
.prices strong { padding: 0 30px; border: 1px solid #bbf7d0; border-radius: 8px; background: #dcfce7; color: #15803d; font-size: 34px; line-height: 72px; }
.save { display: flex; align-items: center; gap: 3px; height: 32px; padding: 0 14px; border-radius: 16px; background: #ffedd5; color: #9a3412; font-family: "Noto Sans", sans-serif; font-size: 16px; font-weight: 500; }
.hero h2 { margin: 8px 0 26px; font-family: "Noto Sans", sans-serif; font-size: 34px; line-height: 45px; font-weight: 500; color: #334155; }
.hero h3 { margin: 0 0 9px; font-family: "Noto Sans", sans-serif; font-size: 21px; line-height: 34px; font-weight: 500; color: #0f172a; }
.hero p { margin: 0; font-size: 23px; line-height: 34px; color: #475569; }
.sbar { flex: none; width: 23px; display: flex; flex-direction: column; align-items: center; padding: 8px 0; background: #fcfcfc; }
.sbar svg { width: 14px; height: 10px; }
.sbar i { width: 13px; height: 43px; margin: 9px 0 auto; border-radius: 7px; background: #858585; }

/* Taskbar */
.taskbar { flex: none; display: flex; align-items: stretch; height: 60px; background: #e4ebee; color: #000; }
.start { width: 72px; display: grid; place-items: center; }
.wsearch { flex: 0 1 432px; display: flex; align-items: center; gap: 16px; padding-left: 16px; background: #fff; border: 2px solid #cbcbcb; }
.wsearch input { flex: 1; min-width: 0; font-size: 21px; }
.wsearch input::placeholder { color: #333; opacity: 1; }
.apps { display: flex; padding-left: 4px; }
.apps button { position: relative; width: 75px; display: grid; place-items: center; }
.apps .open::after { content: ""; position: absolute; left: 7px; right: 7px; bottom: 0; height: 3px; background: #0078d7; }
.apps .cur { background: #f6f9fa; }
.apps .cur::after { left: 0; right: 0; }
.tray { margin-left: auto; display: flex; align-items: center; }
.weather { display: flex; align-items: center; gap: 14px; font-size: 19px; margin-right: 38px; }
.wx { position: relative; }
.wx svg { width: 36px; height: 26px; }
.wx em { position: absolute; right: 0; top: -7px; width: 18px; height: 18px; border-radius: 50%; background: #c42b1c; color: #fff; font-size: 13px; line-height: 18px; font-style: normal; }
.sys { display: flex; align-items: center; gap: 13px; margin-right: 15px; }
.lang { font-size: 17px; }
.clock { margin: 0 38px 0 19px; font-size: 17px; line-height: 28px; text-align: center; }
.peek { width: 1px; height: 60px; margin: 0 6px 0 30px; background: #b5bbbe; }
```
